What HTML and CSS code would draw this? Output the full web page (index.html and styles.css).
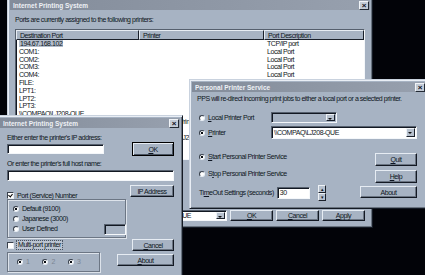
FILE: index.html
```html
<!DOCTYPE html>
<html lang="en">

<head>
    <meta charset="UTF-8">
    <title>Internet Printing System</title>
    <link rel="stylesheet" href="styles.css">
</head>

<body>
    <div class="desk">

        <!-- back window: port list -->
        <div class="win w1">
            <div class="title"><span>Internet Printing System</span><span class="x">×</span></div>
            <div class="body">
                <p class="lead">Ports are currently assigned to the following printers:</p>
                <div class="list">
                    <div class="head"><span>Destination Port</span><span>Printer</span><span>Port Description</span></div>
                    <div class="row"><span><em class="sel">194.67.168.102</em></span><span></span><span>TCP/IP port</span></div>
                    <div class="row"><span>COM1:</span><span></span><span>Local Port</span></div>
                    <div class="row"><span>COM2:</span><span></span><span>Local Port</span></div>
                    <div class="row"><span>COM3:</span><span></span><span>Local Port</span></div>
                    <div class="row"><span>COM4:</span><span></span><span>Local Port</span></div>
                    <div class="row"><span>FILE:</span><span></span><span>Local Port</span></div>
                    <div class="row"><span>LPT1:</span><span></span><span></span></div>
                    <div class="row"><span>LPT2:</span><span></span><span></span></div>
                    <div class="row"><span>LPT3:</span><span></span><span></span></div>
                    <div class="row"><span>\\COMPAQ\LJ208-QUE</span><span></span><span></span></div>
                    <div class="row"><span></span><span class="far">Printers</span><span></span></div>
                    <div class="row"><span></span><span></span><span></span></div>
                    <div class="row"><span></span><span class="far">LJ208 2C</span><span></span></div>
                </div>
                <div class="foot">
                    <div class="combo wide"><span><b>\\COMPAQ\LJ208-QUE</b></span><i class="drop"></i></div>
                    <button class="btn"><u>O</u>K</button>
                    <button class="btn"><u>C</u>ancel</button>
                    <button class="btn"><u>A</u>pply</button>
                </div>
            </div>
        </div>

        <!-- personal printer service -->
        <div class="win w3">
            <div class="title"><span>Personal Printer Service</span><span class="x">×</span></div>
            <div class="body">
                <p class="lead">PPS will re-direct incoming print jobs to either a local port or a selected printer.</p>
                <div class="pick first">
                    <label class="opt"><i class="rd"></i><span><u>L</u>ocal Printer Port</span></label>
                    <div class="combo off"><span></span><i class="drop"></i></div>
                </div>
                <div class="pick">
                    <label class="opt"><i class="rd on"></i><span><u>P</u>rinter</span></label>
                    <div class="combo long"><span>\\COMPAQ\LJ208-QUE</span><i class="drop"></i></div>
                </div>
                <div class="svc start">
                    <label class="opt"><i class="rd on"></i><span><u>S</u>tart Personal Printer Service</span></label>
                    <button class="btn quit"><u>Q</u>uit</button>
                </div>
                <div class="svc">
                    <label class="opt"><i class="rd"></i><span>S<u>t</u>op Personal Printer Service</span></label>
                    <button class="btn help"><u>H</u>elp</button>
                </div>
                <div class="svc tmo">
                    <div class="timeout">
                        <span>Ti<u>m</u>eOut Settings (seconds)</span>
                        <span class="field num">30</span>
                        <span class="spin"><i>▴</i><i>▾</i></span>
                    </div>
                    <button class="btn about3">About</button>
                </div>
            </div>
        </div>

        <!-- front-left dialog -->
        <div class="win w2">
            <div class="title"><span>Internet Printing System</span><span class="x">×</span></div>
            <div class="body">
                <p class="cap">Either enter the printer's IP address:</p>
                <div class="line">
                    <span class="field ip"></span>
                    <button class="btn ok"><u>O</u>K</button>
                </div>
                <p class="cap">Or enter the printer's full host name:</p>
                <span class="field host"></span>
                <div class="line top">
                    <div class="left">
                        <label class="opt chk"><i class="cb on"></i><span>Port (Service) Number</span></label>
                        <div class="group">
                            <label class="opt"><i class="rd on"></i><span>Default (9100)</span></label>
                            <label class="opt"><i class="rd"></i><span>Japanese (3000)</span></label>
                            <div class="ud">
                                <label class="opt"><i class="rd"></i><span>User Defined</span></label>
                                <span class="field small"></span>
                            </div>
                        </div>
                    </div>
                    <button class="btn ipa">IP Address</button>
                </div>
                <div class="line mid">
                    <label class="opt"><i class="cb"></i><span class="focus">Multi-port printer</span></label>
                    <button class="btn cancel"><u>C</u>ancel</button>
                </div>
                <div class="line top">
                    <div class="group ports">
                        <label class="opt dim"><i class="rd on"></i><span>1</span></label>
                        <label class="opt dim"><i class="rd on"></i><span>2</span></label>
                        <label class="opt dim"><i class="rd on"></i><span>3</span></label>
                    </div>
                    <button class="btn about2"><u>A</u>bout</button>
                </div>
            </div>
        </div>

    </div>
</body>

</html>
```

FILE: styles.css
```css
body {
    margin: 0;
    background: #000;
    font-family: "Liberation Sans", Arial, sans-serif;
    font-size: 7px;
    letter-spacing: -0.45px;
    color: #0e1622;
}

.desk {
    position: relative;
    width: 425px;
    height: 275px;
    overflow: hidden;
    background: #020308;
}

p {
    margin: 0;
    white-space: nowrap;
}

u {
    text-decoration: underline;
}

/* windows */

.win {
    position: absolute;
    box-sizing: border-box;
    padding: 2px;
    background: #a7b3c3;
    border: 1px solid;
    border-color: #c9d2de #141a24 #141a24 #c9d2de;
    box-shadow: inset 1px 1px 0 #e9eef5, inset -1px -1px 0 #69737f;
}

.title {
    display: flex;
    justify-content: space-between;
    align-items: center;
    height: 10px;
    padding: 0 1px 0 3px;
    background: linear-gradient(90deg, #838c9a, #97a0ae);
    color: #eef1f5;
    font-weight: bold;
    font-size: 6.5px;
    letter-spacing: 0;
}

.x {
    width: 8px;
    height: 7px;
    line-height: 7px;
    text-align: center;
    background: #c3cbd6;
    color: #0b1018;
    font-size: 8px;
    border: 1px solid;
    border-color: #f0f3f7 #222a34 #222a34 #f0f3f7;
}

.w1 {
    left: 7px;
    top: -3px;
    width: 366px;
    height: 231px;
}

.w2 {
    left: -3px;
    top: 115px;
    width: 186px;
    height: 175px;
}

.w3 {
    left: 189px;
    top: 79px;
    width: 240px;
    height: 130px;
}

/* controls */

.btn {
    box-sizing: border-box;
    height: 12px;
    padding: 0;
    margin: 0;
    font: inherit;
    letter-spacing: inherit;
    color: inherit;
    background: #a7b3c3;
    border: 1px solid;
    border-color: #e6ecf3 #131923 #131923 #e6ecf3;
    box-shadow: inset -1px -1px 0 #6a7482;
}

.field {
    display: block;
    box-sizing: border-box;
    background: #fff;
    border: 1px solid;
    border-color: #56606e #f4f7fa #f4f7fa #56606e;
    box-shadow: inset 1px 1px 0 #121822;
}

.combo {
    display: flex;
    box-sizing: border-box;
    height: 11px;
    background: #fff;
    border: 1px solid;
    border-color: #56606e #f4f7fa #f4f7fa #56606e;
    box-shadow: inset 1px 1px 0 #121822;
    line-height: 9px;
}

.combo span {
    flex: 1;
    padding-left: 2px;
    white-space: nowrap;
    overflow: hidden;
}

.combo.off {
    background: #a7b3c3;
}

.drop {
    width: 7px;
    margin: 1px 1px 1px 0;
    background: #b7c1ce;
    border: 1px solid;
    border-color: #eef2f6 #1a202a #1a202a #eef2f6;
    position: relative;
}

.drop::after {
    content: "";
    position: absolute;
    left: 1px;
    top: 3px;
    border: 2px solid transparent;
    border-top: 2px solid #111;
    border-bottom: 0;
}

.opt {
    display: flex;
    align-items: center;
    gap: 3px;
    white-space: nowrap;
    line-height: 8px;
}

.rd {
    flex: none;
    box-sizing: border-box;
    width: 6px;
    height: 6px;
    border-radius: 50%;
    background: #fff;
    border: 1px solid;
    border-color: #38404c #e8eef4 #e8eef4 #38404c;
}

.rd.on {
    background: radial-gradient(circle, #080c12 1.2px, #fff 1.5px);
}

.cb {
    flex: none;
    box-sizing: border-box;
    width: 7px;
    height: 7px;
    background: #fff;
    border: 1px solid;
    border-color: #38404c #e8eef4 #e8eef4 #38404c;
    position: relative;
}

.cb.on::after {
    content: "";
    position: absolute;
    left: 1px;
    top: 0;
    width: 2px;
    height: 3px;
    border: solid #000;
    border-width: 0 1px 1px 0;
    transform: rotate(40deg);
}

.group {
    box-sizing: border-box;
    border: 1px solid #6c7684;
    box-shadow: 1px 1px 0 #dde3eb, inset 1px 1px 0 #dde3eb;
}

/* back window */

.w1 .body {
    padding: 6px 5px 0;
}

.w1 .lead {
    line-height: 8px;
    margin-bottom: 5px;
}

.list {
    height: 129px;
    background: #fff;
    border: 1px solid;
    border-color: #56606e #f4f7fa #f4f7fa #56606e;
    box-shadow: inset 1px 1px 0 #121822;
    overflow: hidden;
}

.head,
.row {
    display: grid;
    grid-template-columns: 123px 125px 1fr;
}

.head span {
    box-sizing: border-box;
    height: 10px;
    line-height: 9px;
    padding-left: 3px;
    background: #a7b3c3;
    border: 1px solid;
    border-color: #e6ecf3 #1a202a #1a202a #e6ecf3;
}

.row {
    height: 7.8px;
    line-height: 8px;
}

.row span {
    padding-left: 3px;
    white-space: nowrap;
}

.row em {
    font-style: normal;
}

.sel {
    background: #b3bdcb;
    padding: 0 1px;
}

.far {
    padding-left: 40px !important;
}

.foot {
    display: flex;
    justify-content: flex-end;
    gap: 3px;
    margin-top: 50px;
}

.foot .btn {
    width: 43px;
    height: 11px;
}

.combo.wide {
    flex: none;
    width: 82px;
}

.combo.wide span {
    display: flex;
    justify-content: flex-end;
    padding: 0 25px 0 0;
}

.combo.wide b {
    font-weight: normal;
    flex: none;
}

/* personal printer service */

.w3 .body {
    padding: 3px 9px 0 5px;
}

.w3 .lead {
    line-height: 8px;
}

.pick {
    display: flex;
    align-items: center;
    margin-top: 3px;
}

.pick.first {
    margin-top: 9px;
}

.pick .opt {
    width: 74px;
    padding-left: 2px;
    box-sizing: border-box;
}

.combo.off {
    width: 66px;
}

.combo.long {
    flex: 1;
    height: 13px;
    line-height: 11px;
}

.svc {
    display: flex;
    justify-content: space-between;
    align-items: flex-start;
    margin-top: 4px;
}

.svc .opt {
    padding-left: 2px;
}

.svc.start {
    margin-top: 14px;
}

.quit,
.help {
    width: 42px;
    height: 13px;
}

.svc.tmo {
    margin-top: 3px;
}

.timeout {
    display: flex;
    align-items: center;
    gap: 3px;
    padding-left: 2px;
    height: 13px;
    white-space: nowrap;
}

.num {
    width: 33px;
    height: 12px;
    line-height: 10px;
    padding-left: 2px;
}

.spin {
    display: flex;
    flex-direction: column;
    margin-left: 5px;
}

.spin i {
    width: 6px;
    height: 6px;
    font-style: normal;
    font-size: 5px;
    line-height: 6px;
    text-align: center;
    background: #b7c1ce;
    border: 1px solid;
    border-color: #eef2f6 #1a202a #1a202a #eef2f6;
}

.about3 {
    width: 57px;
    height: 12px;
}

/* front dialog */

.w2 .body {
    padding: 6px 6px 0 7px;
}

.cap {
    line-height: 8px;
}

.line {
    display: flex;
    justify-content: space-between;
    align-items: center;
}

.line.top {
    align-items: flex-start;
}

.ip {
    width: 97px;
    height: 10px;
}

.ok {
    width: 42px;
    height: 14px;
    border-color: #000;
    box-shadow: inset 1px 1px 0 #e6ecf3, inset -1px -1px 0 #4a5462;
}

.w2 .cap + .field {
    margin-top: 2px;
}

.w2 .line + .cap {
    margin-top: 4px;
}

.host {
    height: 11px;
    margin-bottom: 4px;
}

.left {
    width: 119px;
}

.chk {
    margin-top: 7px;
    height: 7px;
}

.left .group {
    height: 39px;
    padding: 4px 0 0 5px;
}

.left .group .opt {
    height: 10px;
    line-height: 10px;
}

.ud {
    display: flex;
    justify-content: space-between;
    align-items: flex-start;
}

.small {
    width: 22px;
    height: 11px;
    margin-right: -1px;
    background: #a7b3c3;
}

.ipa {
    width: 44px;
    height: 12px;
}

.line.mid {
    height: 14px;
}

.focus {
    background: #bcc5d2;
    outline: 1px dotted #4a5462;
    padding: 0 1px;
}

.cancel {
    width: 42px;
}

.ports {
    display: flex;
    gap: 13px;
    width: 93px;
    height: 20px;
    padding-left: 9px;
    align-items: center;
}

.dim {
    color: #7c8694;
}

.about2 {
    width: 57px;
    margin-top: 2px;
}
```
